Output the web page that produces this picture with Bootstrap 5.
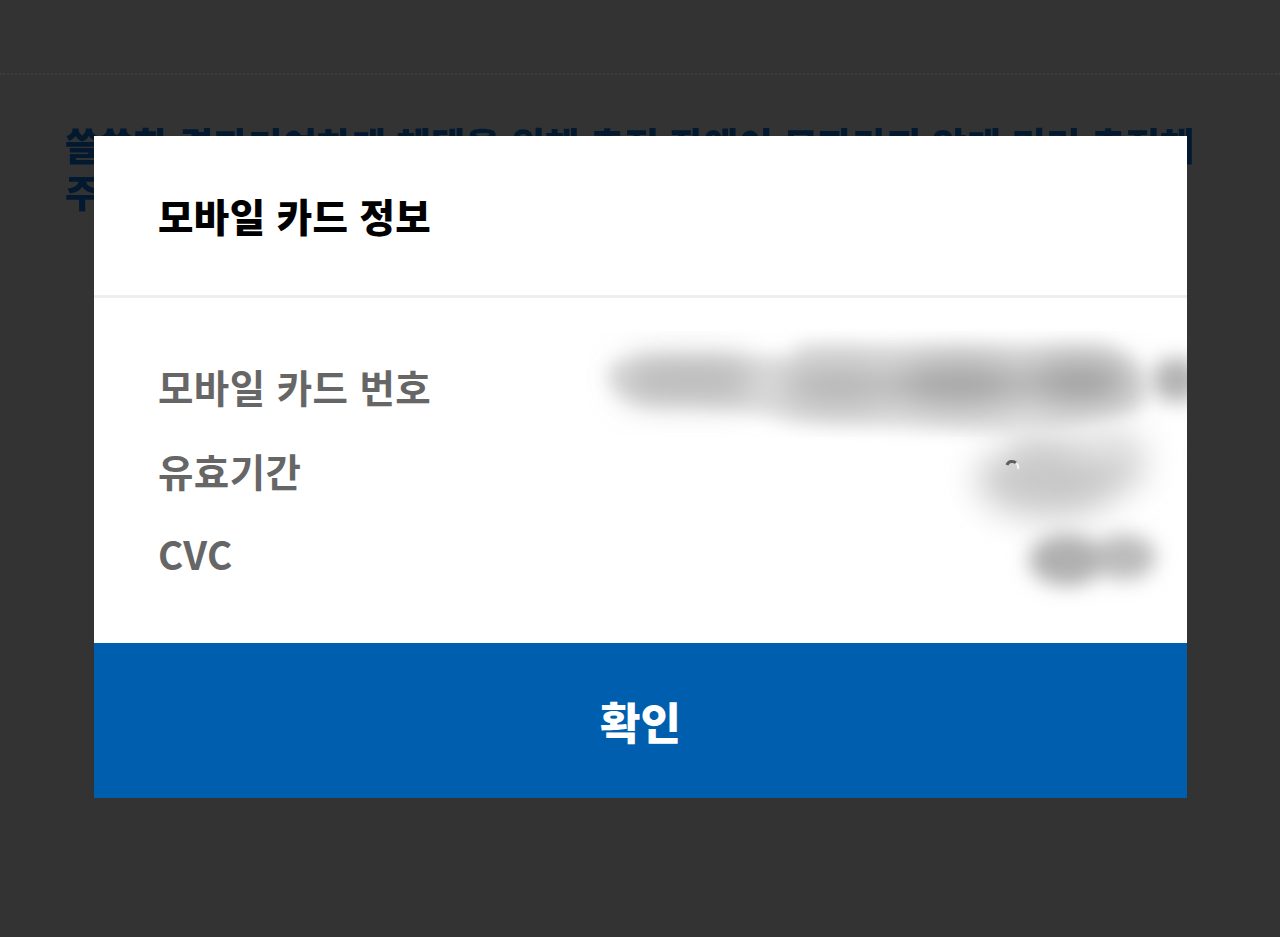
<!doctype html>
<html lang="ko">
<head>
<meta charset="utf-8">
<title>모바일 카드 정보</title>
<link href="https://cdn.jsdelivr.net/npm/bootstrap@5.3.0/dist/css/bootstrap.min.css" rel="stylesheet">
<style>
html, body { height: 100%; }
body { background: #333333; font-family: "Noto Sans CJK KR", "Noto Sans", sans-serif; overflow: hidden; }
.page-rule { border-top: 2px dotted #3d3d3d; margin-top: 73px; }
.page-note { margin: 45px 80px 0 65px; font-size: 37.5px; line-height: 47px; font-weight: 900; color: #02192f; filter: blur(.5px); }
.sheet-wrap { position: fixed; inset: 0; padding-bottom: 3px; }
.sheet { width: 1093px; height: 662px; background: #fff; margin-left: 1px; }
.sheet-head { height: 162px; padding: 0 64px; border-bottom: 3px solid #eeeeee; flex: none; }
.sheet-title { font-size: 38.5px; line-height: 1; font-weight: 900; color: #000; margin: 0; letter-spacing: .4px; }
.sheet-body { padding: 64px 64px 0; overflow: hidden; }
.info-row { height: 83.5px; font-size: 38.5px; line-height: 48px; font-weight: 700; color: #666666; letter-spacing: .4px; }
.smudge { top: 0; left: 0; width: 1093px; height: 345px; }
.sheet-ok { height: 155px; flex: none; background: #005eae; color: #fff; font-size: 44px; font-weight: 900; border-radius: 0; border: 0; }
.sheet-ok:hover, .sheet-ok:active { background: #005eae !important; color: #fff !important; }
</style>
</head>
<body>
<div class="page-rule"></div>
<p class="page-note">쓸쓸한 결과기여하게 혜택을 위해 충전 잔액이 모자라지 않게 미리 충전해 주세요</p>

<div class="sheet-wrap d-flex align-items-center justify-content-center">
  <div class="sheet d-flex flex-column" role="dialog">
    <div class="sheet-head d-flex align-items-center">
      <h2 class="sheet-title">모바일 카드 정보</h2>
    </div>
    <div class="sheet-body flex-grow-1 position-relative">
      <div class="info-row">모바일 카드 번호</div>
      <div class="info-row">유효기간</div>
      <div class="info-row">CVC</div>
      <svg class="smudge position-absolute" viewBox="0 0 1093 345" aria-hidden="true">
        <defs>
          <filter id="b1" x="-30%" y="-100%" width="160%" height="300%"><feGaussianBlur stdDeviation="9"/></filter>
          <filter id="b2" x="-30%" y="-60%" width="160%" height="220%"><feGaussianBlur stdDeviation="17"/></filter>
          <filter id="b3" x="-30%" y="-60%" width="160%" height="220%"><feGaussianBlur stdDeviation="10"/></filter>
        </defs>
        <g filter="url(#b1)">
          <path d="M520 66 C 560 54 640 62 700 58 L 705 46 L 1010 46 C 1050 60 1065 90 1045 112 C 1010 132 960 138 900 134 L 700 124 C 650 112 620 106 560 106 C 515 105 505 75 520 66 Z" fill="#dedede"/>
        </g>
        <g filter="url(#b2)">
          <rect x="530" y="62" width="130" height="40" rx="20" fill="#b8b8b8"/>
          <ellipse cx="745" cy="88" rx="60" ry="22" fill="#b4b4b4"/>
          <ellipse cx="865" cy="86" rx="70" ry="22" fill="#a0a0a0"/>
          <ellipse cx="985" cy="84" rx="55" ry="22" fill="#9c9c9c"/>
        </g>
        <g filter="url(#b3)">
          <path d="M925 130 C 960 146 1000 138 1030 128 L 1040 160 L 920 170 Z" fill="#ededed"/>
          <rect x="1058" y="60" width="50" height="44" rx="22" fill="#b4b4b4"/>
        </g>
        <g filter="url(#b2)">
          <ellipse cx="955" cy="182" rx="72" ry="38" fill="#cacaca"/>
          <ellipse cx="990" cy="170" rx="60" ry="28" fill="#c6c6c6"/>
          <ellipse cx="1015" cy="150" rx="44" ry="14" fill="#e4e4e4"/>
        </g>
        <path d="M913 167 a5.500 5.500 0 0 1 9 -2" fill="none" stroke="#5f5f5f" stroke-width="3"/>
        <path d="M922 165 a6 6 0 0 1 2 6" fill="none" stroke="#f4f4f4" stroke-width="2"/>
        <g filter="url(#b3)">
          <ellipse cx="973" cy="262" rx="38" ry="26" fill="#b0b0b0"/>
          <ellipse cx="1030" cy="259" rx="32" ry="23" fill="#bcbcbc"/>
        </g>
      </svg>
    </div>
    <button type="button" class="btn sheet-ok w-100">확인</button>
  </div>
</div>
<script src="https://cdn.jsdelivr.net/npm/bootstrap@5.3.0/dist/js/bootstrap.bundle.min.js"></script>
</body>
</html>
